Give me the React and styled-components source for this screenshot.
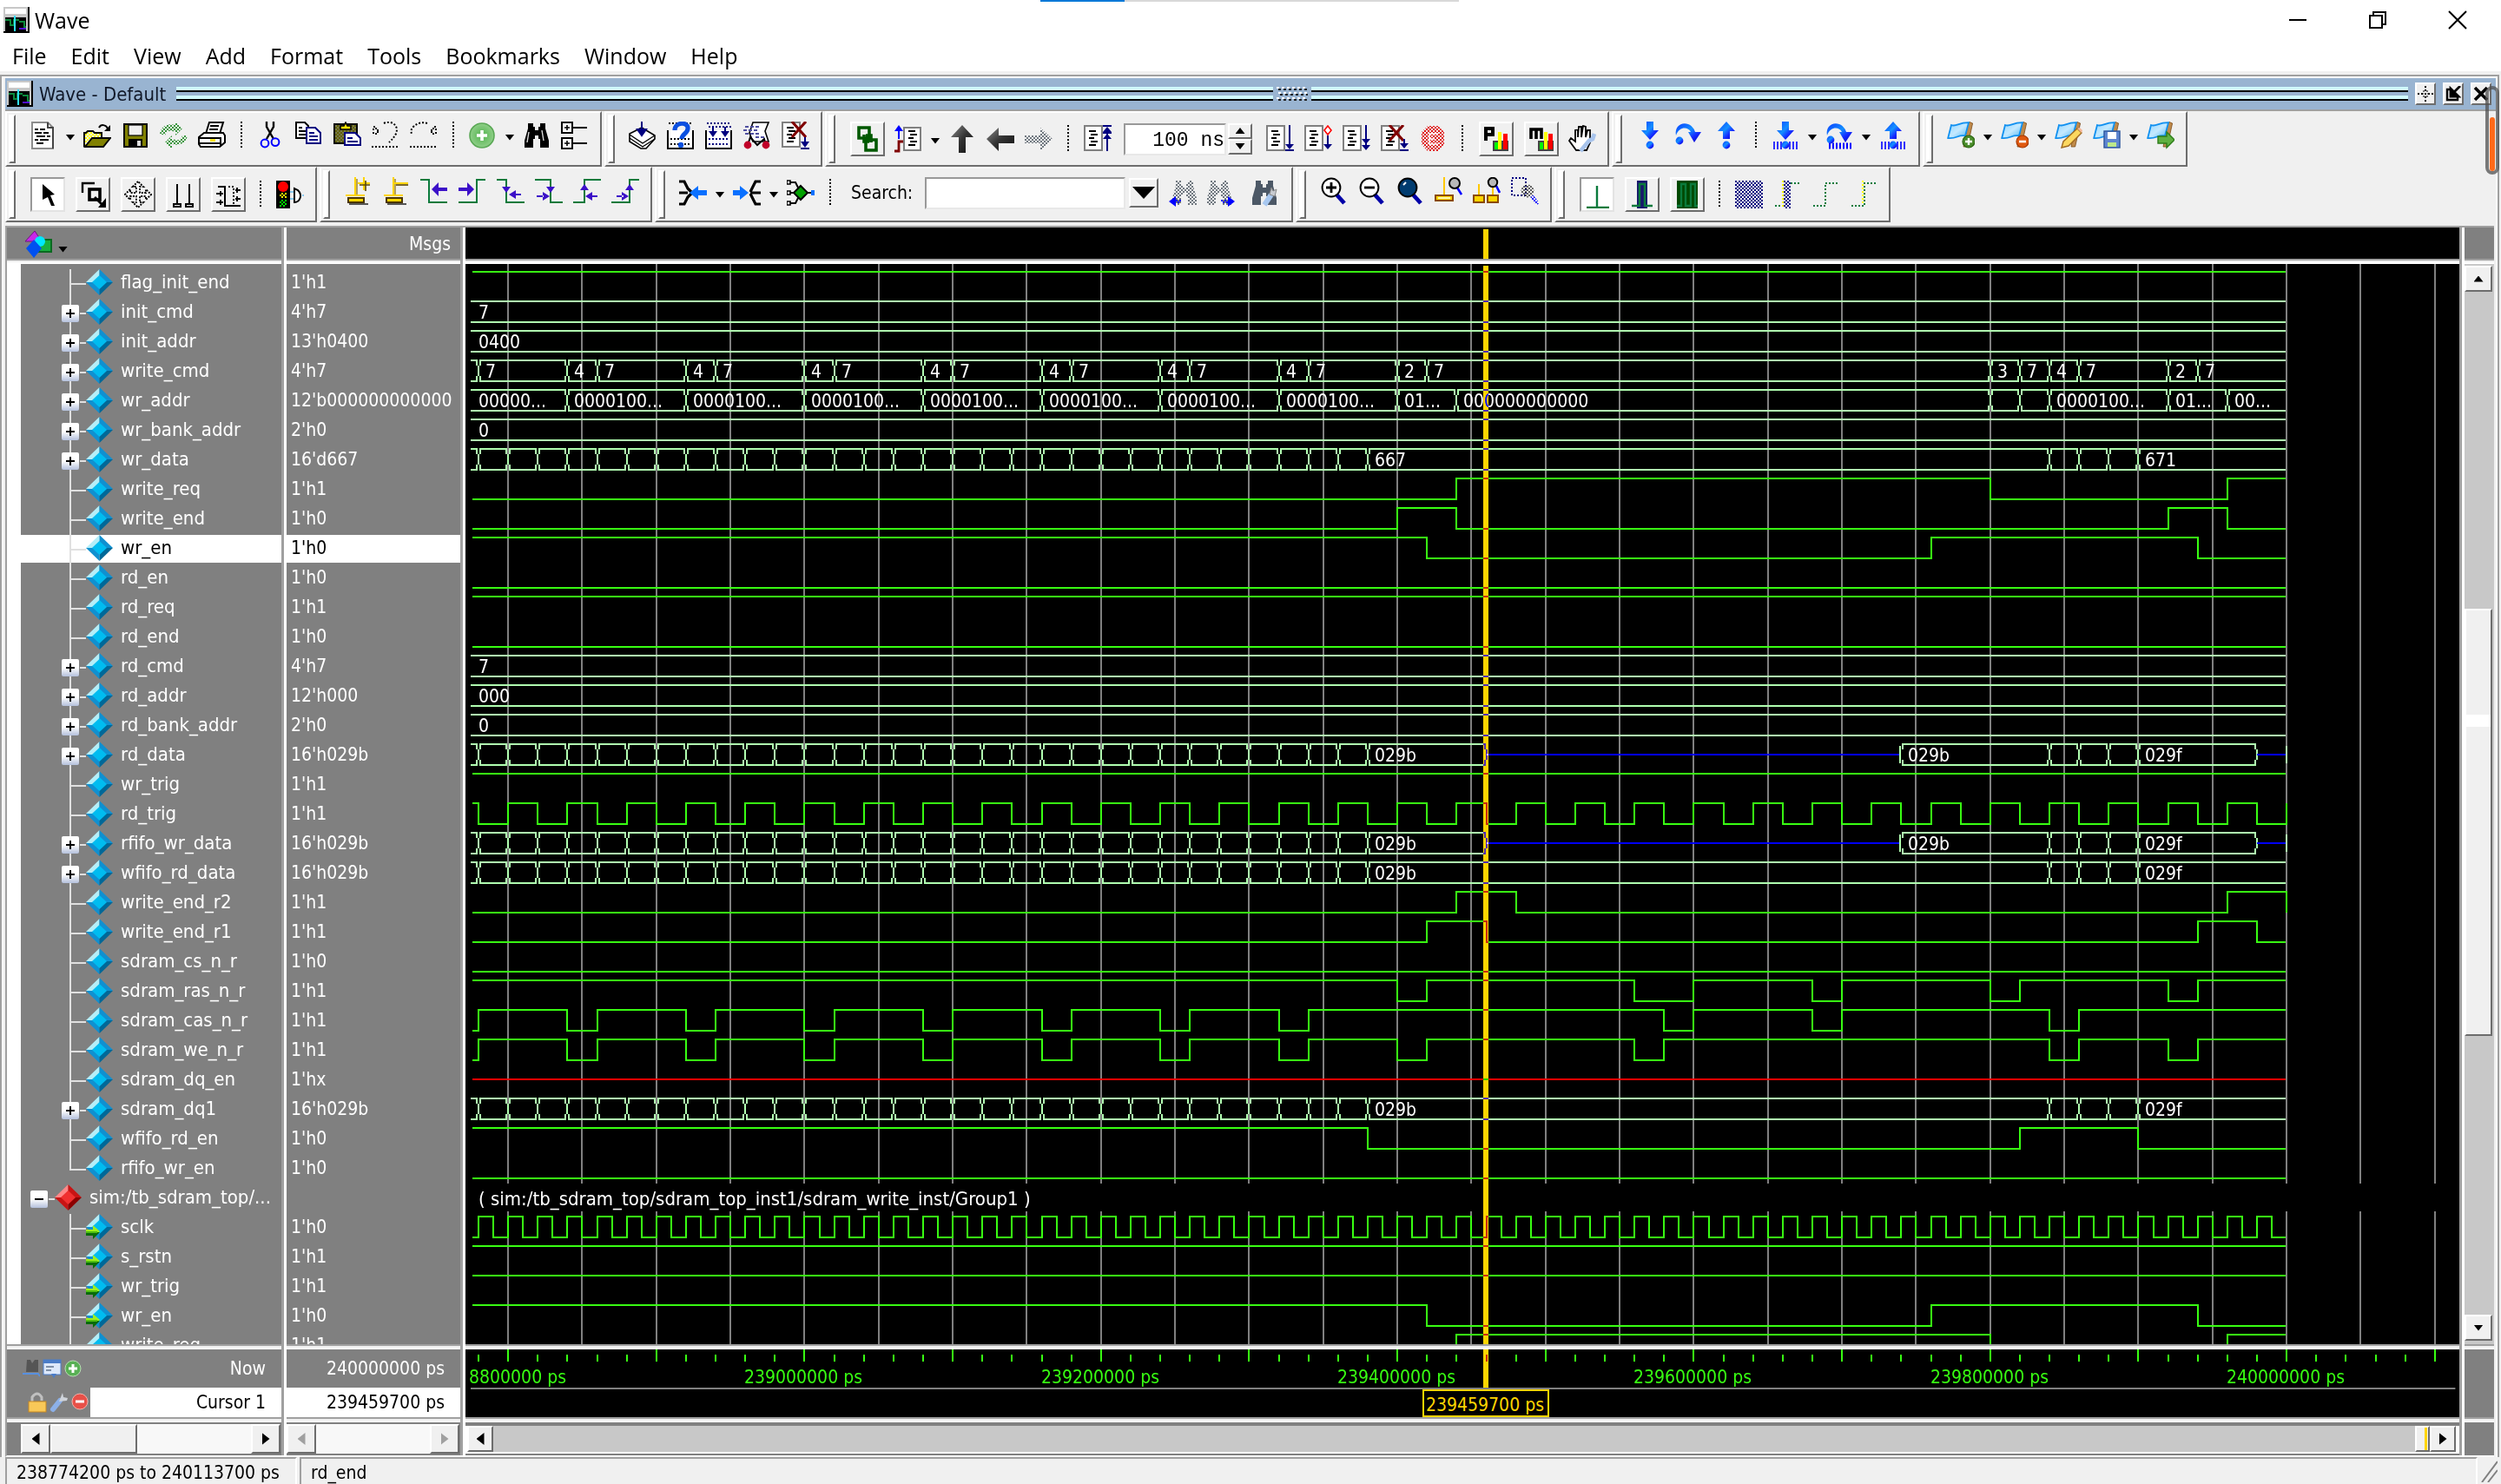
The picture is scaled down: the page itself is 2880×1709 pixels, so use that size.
import React from "react";
import styled, { createGlobalStyle, css } from "styled-components";

const UI = '"DejaVu Sans Condensed", "Noto Sans", sans-serif';
const MENU = '"Open Sans", "Noto Sans", sans-serif';

/* ---------- signal data, times are in 20 ns clock periods ---------- */

const END = 61;
const ticks = (from, to) =>
  Array.from({ length: to - from + 1 }, (_, i) => [from + i, ""]);
const burst = [...ticks(0, 29), [30, "029b"]];
const tail = [...ticks(53, 55), [56, "029f"]];
const bursts = [3, 7, 11, 15, 19, 23, 27];

const high = (...flips) => ({ kind: "bit", level: 1, flips });
const low = (...flips) => ({ kind: "bit", level: 0, flips });
const bus = (...segs) => ({ kind: "bus", segs });

const clock = (step, first) => {
  const out = [];
  for (let t = first; t < END; t += step) out.push(t);
  return out;
};

const signals = [
  { name: "flag_init_end", value: "1'h1", wave: high() },
  { name: "init_cmd", value: "4'h7", wave: bus([null, "7"]) },
  { name: "init_addr", value: "13'h0400", wave: bus([null, "0400"]) },
  {
    name: "write_cmd",
    value: "4'h7",
    wave: bus(
      [null, ""],
      [0, "7"],
      ...bursts.flatMap((t) => [
        [t, "4"],
        [t + 1, "7"],
      ]),
      [31, "2"],
      [32, "7"],
      [51, "3"],
      [52, "7"],
      [53, "4"],
      [54, "7"],
      [57, "2"],
      [58, "7"]
    ),
  },
  {
    name: "wr_addr",
    value: "12'b000000000000",
    wave: bus(
      [null, "00000..."],
      ...bursts.map((t) => [t, "0000100..."]),
      [31, "01..."],
      [33, "000000000000"],
      [51, ""],
      [52, ""],
      [53, "0000100..."],
      [57, "01..."],
      [59, "00..."]
    ),
  },
  { name: "wr_bank_addr", value: "2'h0", wave: bus([null, "0"]) },
  {
    name: "wr_data",
    value: "16'd667",
    wave: bus([null, ""], ...ticks(0, 29), [30, "667"], ...ticks(53, 55), [56, "671"]),
  },
  { name: "write_req", value: "1'h1", wave: low(33, 51, 59) },
  { name: "write_end", value: "1'h0", wave: low(31, 33, 57, 59) },
  { name: "wr_en", value: "1'h0", wave: high(32, 49, 58), selected: true },
  { name: "rd_en", value: "1'h0", wave: low() },
  { name: "rd_req", value: "1'h1", wave: high() },
  { name: "rd_end", value: "1'h0", wave: low() },
  { name: "rd_cmd", value: "4'h7", wave: bus([null, "7"]) },
  { name: "rd_addr", value: "12'h000", wave: bus([null, "000"]) },
  { name: "rd_bank_addr", value: "2'h0", wave: bus([null, "0"]) },
  {
    name: "rd_data",
    value: "16'h029b",
    wave: bus([null, ""], ...burst, [34, "z"], [48, "029b"], ...tail, [60, "z"]),
  },
  { name: "wr_trig", value: "1'h1", wave: high() },
  { name: "rd_trig", value: "1'h1", wave: high(...clock(1, 0), END) },
  {
    name: "rfifo_wr_data",
    value: "16'h029b",
    wave: bus([null, ""], ...burst, [34, "z"], [48, "029b"], ...tail, [60, "z"]),
  },
  { name: "wfifo_rd_data", value: "16'h029b", wave: bus([null, ""], ...burst, ...tail) },
  { name: "write_end_r2", value: "1'h1", wave: low(33, 35, 59, END) },
  { name: "write_end_r1", value: "1'h1", wave: low(32, 34, 58, 60) },
  { name: "sdram_cs_n_r", value: "1'h0", wave: low() },
  { name: "sdram_ras_n_r", value: "1'h1", wave: high(31, 32, 39, 41, 45, 46, 51, 52, 57, 58) },
  {
    name: "sdram_cas_n_r",
    value: "1'h1",
    wave: low(0, ...bursts.flatMap((t) => [t, t + 1]), 40, 41, 45, 46, 53, 54),
  },
  {
    name: "sdram_we_n_r",
    value: "1'h1",
    wave: low(0, ...bursts.flatMap((t) => [t, t + 1]), 31, 32, 39, 40, 53, 54, 57, 58),
  },
  { name: "sdram_dq_en", value: "1'hx", wave: { kind: "unknown" } },
  { name: "sdram_dq1", value: "16'h029b", wave: bus([null, ""], ...burst, ...tail) },
  { name: "wfifo_rd_en", value: "1'h0", wave: high(30, 52, 56) },
  { name: "rfifo_wr_en", value: "1'h0", wave: low(), last: true },
  {
    name: "sim:/tb_sdram_top/...",
    value: "",
    group: true,
    wave: {
      kind: "label",
      text: "( sim:/tb_sdram_top/sdram_top_inst1/sdram_write_inst/Group1 )",
    },
  },
  { name: "sclk", value: "1'h0", port: true, wave: low(...clock(0.5, 0)) },
  { name: "s_rstn", value: "1'h1", port: true, wave: high() },
  { name: "wr_trig", value: "1'h1", port: true, wave: high() },
  { name: "wr_en", value: "1'h0", port: true, wave: high(32, 49, 58) },
  { name: "write_req", value: "1'h1", wave: low(33, 51, 59) },
];

/* ---------- icons, drawn on a 16 unit grid ---------- */

const NAVY = "#000080";
const BLUE = "#0000ff";

const Defs = () => (
  <HiddenSvg aria-hidden="true">
    <defs>
      {[
        ["dotBlack", "#000"],
        ["dotGreen", "#3c9640"],
        ["dotYellow", "#ffff00"],
        ["dotOlive", "#606000"],
        ["dotBlue", BLUE],
        ["dotNavy", NAVY],
        ["dotRed", "#e01818"],
        ["dotLime", "#00e000"],
        ["dotGray", "#707880"],
      ].map(([id, c]) => (
        <pattern key={id} id={id} width="2" height="2" patternUnits="userSpaceOnUse">
          <rect width="1" height="1" fill={c} />
          <rect x="1" y="1" width="1" height="1" fill={c} />
        </pattern>
      ))}
      <linearGradient id="arrowBlue" x1="0" y1="0" x2="1" y2="1">
        <stop offset="0" stopColor="#0a3cff" />
        <stop offset=".45" stopColor="#1490ff" />
        <stop offset=".7" stopColor="#1428ff" />
        <stop offset="1" stopColor="#0000b8" />
      </linearGradient>
      <linearGradient id="arrowDark" x1="0" y1="0" x2="1" y2="1">
        <stop offset="0" stopColor="#8a8a8a" />
        <stop offset=".5" stopColor="#333" />
        <stop offset="1" stopColor="#111" />
      </linearGradient>
      <linearGradient id="flagBlue" x1="0" y1="0" x2="1" y2="1">
        <stop offset="0" stopColor="#8fd4ff" />
        <stop offset=".5" stopColor="#c4e9ff" />
        <stop offset="1" stopColor="#49b4f5" />
      </linearGradient>
      <radialGradient id="plusGreen">
        <stop offset="0" stopColor="#52b24e" />
        <stop offset="1" stopColor="#8fcf88" />
      </radialGradient>
    </defs>
  </HiddenSvg>
);

const MiniDoc = () => (
  <>
    <rect x=".5" y=".5" width="10" height="14" fill="#fff" stroke="#808080" />
    <path d="M3 3.5h4M4 5.5h4M3 7.5h3M4 9.5h4M3 11.5h4" stroke="#000" />
  </>
);
const RedX = ({ x = 0 }) => (
  <path d={`M${5 + x} 0l8 9M${13 + x} 0l-8 9`} stroke="#800000" strokeWidth="1.6" />
);
const Flag = () => (
  <>
    <path d="M13 .3l1.800 .7-3 13.500h-2.300l2.500-13z" fill="#c08a4a" stroke="#7a4a18" strokeWidth=".4" />
    <path
      d="M2.500 2C5.500 3.200 6.500 .5 12.500 .6L10.500 8.200C6 7.500 6 10 .6 9.500z"
      fill="url(#flagBlue)"
      stroke="#1090f0"
      strokeWidth=".9"
    />
  </>
);
const DownArrow = () => <path d="M6 0h4v5h3L8 10.500 3 5h3z" fill="url(#arrowBlue)" />;
const UpArrow = () => <path d="M8 0l5 5.500h-3V10H6V5.500H3z" fill="url(#arrowBlue)" />;
const Hop = () => (
  <path d="M1 8C0 3 4 0 8 1.500c2.500 1 3.500 3 4 4.500h3.500L11.500 12 8 6h1.500C8 3 3 2.500 1 8z" fill="url(#arrowBlue)" />
);
const Bars = () => (
  <path d="M1.500 11.500v4.500M3.500 11.500v4.500M5.500 11.500v4.500M10.500 11.500v4.500M12.500 11.500v4.500M14.500 11.500v4.500" stroke={BLUE} strokeWidth=".8" />
);
const Ball = ({ x = 8, y = 13.5 }) => <circle cx={x} cy={y} r="2.200" fill="url(#arrowBlue)" />;
const Lens = ({ children, fill = "#fff" }) => (
  <>
    <path d="M9.500 10l4.500 5" stroke="#0000a8" strokeWidth="2.400" />
    <circle cx="6.500" cy="6" r="5.200" fill={fill} stroke="#000" strokeWidth="1" />
    {children}
  </>
);
const SmallCursor = ({ x = 0 }) => (
  <>
    <path d={`M${5.5 + x} 0v10`} stroke="#ffc800" strokeWidth="1" />
    <rect x={0.5 + x} y="10.500" width="10" height="3" fill="#ffd500" stroke="#8a4a00" />
    <path d={`M${2 + x} 12h7`} stroke="#fff4b0" />
  </>
);
const AddCursor = ({ minus }) => (
  <>
    <path d="M3 15.500h11" stroke="#555" />
    <path d="M6.500 0v11M1 10.500h11" stroke="#ffd500" />
    <path d="M7.500 1v9" stroke="#8a6a00" strokeWidth=".6" />
    <rect x="2.500" y="12" width="9" height="2.500" fill="#ffd500" stroke="#4a3500" />
    <path d={minus ? "M7 3.500h8" : "M8 3.500h7M11.500 0v7.500"} stroke="#ffd500" />
    <path d={minus ? "M8 4.500h7" : "M9 4.500h6M12.500 2v6"} stroke="#5a4600" strokeWidth=".8" />
  </>
);
const EDGE = "#0a7a3c";
const PURPLE = "#3c10c8";
const arrowHead = {
  left: "M0 0l4-4v3h5v2H4v3z",
  right: "M9 0L5-4v3H0v2h5v3z",
};
const Binoculars = ({ fill = "#000" }) => (
  <path
    d="M3 1h3v2h1v2h2V3h1V1h3v3l2 7v4h-5v-5H9V8H7v2H6v5H1v-4l2-7z"
    fill={fill}
  />
);

const glyphs = {
  new: (
    <>
      <path d="M1.500 .5h9l3 3v12h-12z" fill="#fff" stroke="#8c8c8c" />
      <path d="M13.500 3v12.500M10.500 .5v3h3" stroke="#444" fill="none" />
      <path d="M3 4.500h2m1 0h3M3 6.500h4m1 0h3M4 8.500h5m1 0h2M3 10.500h2m1 0h5M4 12.500h4" stroke="#000" />
    </>
  ),
  open: (
    <>
      <path d="M.5 14.500V6.500h1l1-1h3l1 1h4v3" fill="url(#dotYellow)" stroke="#000" />
      <path d="M1 14.500L5 9.500h10.500l-4 5z" fill="#808000" stroke="#000" />
      <path d="M9 3.500c1-2 4-2 5 .5" stroke="#000" fill="none" />
      <path d="M15.500 2v3.500H12z" />
    </>
  ),
  save: (
    <>
      <rect x="1.500" y="1.500" width="13" height="13" fill="#808000" stroke="#000" />
      <rect x="4" y="2" width="8" height="6" fill="#f0f0f0" stroke="#000" strokeWidth=".6" />
      <rect x="4" y="10" width="8" height="5" />
      <rect x="9" y="11" width="2" height="3" fill="#ddd" />
    </>
  ),
  reload: (
    <path
      d="M0 7c1-5 5-6 9-5V0l4 4-4 4V6C6 5 4 5 3 8zM16 8c-1 5-5 6-9 5v3l-4-4 4-4v2c3 1 5 1 6-2z"
      fill="url(#dotGreen)"
    />
  ),
  print: (
    <>
      <path d="M4.500 7L6.500 .5h8l-2 6.500" fill="#fff" stroke="#000" />
      <path d="M.5 9l3-2.500h11l1 1.500v4l-3 2.500H1.500L.5 13z" fill="#fff" stroke="#000" />
      <path d="M7 2.500h5M6.500 4.500h5M1 9.500h12v5M1 12.500h12" stroke="#000" fill="none" />
      <path d="M7 10.800h3" stroke="#ffe600" strokeWidth="1.400" />
    </>
  ),
  cut: (
    <>
      <path d="M5.500 0v3l4 7M9.500 0v3l-4 7" stroke="#000" fill="none" strokeWidth="1.200" />
      <circle cx="4.500" cy="12.500" r="2.200" fill="none" stroke={BLUE} />
      <circle cx="10.500" cy="11.800" r="2.200" fill="none" stroke={BLUE} />
    </>
  ),
  copy: (
    <>
      <path d="M.5 .5h5l2 2v7h-7z" fill="#fff" stroke="#000" />
      <path d="M2 3.500h2M2 5.500h4M2 7.500h4" stroke="#000" />
      <path d="M6.500 3.500h5l3 3v6h-8z" fill="#fff" stroke={NAVY} />
      <path d="M8 6.500h3M8 8.500h5M8 10.500h5" stroke={NAVY} />
    </>
  ),
  paste: (
    <>
      <rect x=".5" y="1.500" width="13" height="11" fill="#77774c" stroke="#000" />
      <rect x="1" y="2" width="12" height="10" fill="url(#dotOlive)" />
      <path d="M4 4.500V2.500h2L7 .5l1 2h2v2z" fill="#ffe600" stroke="#000" strokeWidth=".8" />
      <path d="M6.500 6.500h6l3 3v4h-9z" fill="#fff" stroke={NAVY} />
      <path d="M8 9.500h3M8 11.500h6" stroke={NAVY} />
    </>
  ),
  undo: (
    <>
      <path d="M1 3h1v1h1v1h1v1H3v1H1zM7 1c4-2 9 1 7 6-1 2-2 3-4 5" fill="none" stroke="#000" strokeDasharray="1 1" />
      <path d="M0 14.500h16" stroke="#000" strokeDasharray="1 1" />
    </>
  ),
  redo: (
    <>
      <path d="M15 3h-1v1h-1v1h-1v1h1v1h2zM10 1C7 0 4 1 2 3S1 6 1 8" fill="none" stroke="#000" strokeDasharray="1 1" />
      <path d="M0 14.500h16" stroke="#000" strokeDasharray="1 1" />
    </>
  ),
  add: (
    <>
      <circle cx="7.500" cy="8" r="7" fill="url(#plusGreen)" stroke="#5aa855" strokeWidth=".8" />
      <path d="M7.500 5v6M4.500 8h6" stroke="#fff" strokeWidth="1.800" />
    </>
  ),
  find: (
    <>
      <Binoculars />
      <path d="M3.500 6l-1 6M11 5l1 6" stroke="#ddd" strokeWidth=".7" />
    </>
  ),
  tree: (
    <>
      <path d="M6 3.500h9M6 12.500h9" stroke="#000" />
      <rect x=".5" y=".5" width="6" height="6" fill="#fff" stroke="#000" />
      <rect x=".5" y="9.500" width="6" height="6" fill="#fff" stroke="#000" />
      <path d="M2 3.500h3M3.500 2v3M2 12.500h3M3.500 11v3" stroke="#000" strokeWidth=".8" />
    </>
  ),
  compile: (
    <>
      <path d="M.5 11.500V7l7-3.500 7.500 4.500v2l-5 5.500H7z" fill="#fff" stroke="#000" strokeWidth=".8" />
      <path d="M.5 7.500l7.500 5 7-4.500M.5 9.500l7.500 5 7-4.500" stroke="#000" strokeWidth=".7" fill="none" />
      <path d="M7.500 0v5M5 4.500h5L7.500 8z" fill={NAVY} stroke={NAVY} />
    </>
  ),
  compileOut: (
    <>
      <path d="M.5 5v10.500h14.500V5" fill="#fff" stroke="#000" />
      <path d="M2 10h12M2 13h12M1 1h14" stroke="#000" strokeDasharray="1 1" />
      <path d="M4.500 5c0-5 8-5 7.500-1C12 7 8.500 7 8.500 10" fill="none" stroke="#0a50e0" strokeWidth="2.600" />
      <circle cx="8" cy="13.500" r="1.600" fill="#0a50e0" />
    </>
  ),
  compileAll: (
    <>
      <path d="M.5 5v10.500h14.500V5" fill="#fff" stroke="#000" />
      <path d="M2 10h12M2 13h12M1 1h14M2 3h13" stroke={NAVY} strokeDasharray="1 1" />
      <path d="M4.500 3v4M11.500 3v4" stroke={NAVY} />
      <path d="M2 5.500h5L4.500 9zM9 5.500h5L11.500 9z" fill={NAVY} />
    </>
  ),
  simulate: (
    <>
      <path d="M5.500 .5h9l-2 5 2 6h-9l-2-5z" fill="#fff" stroke="#000" strokeWidth=".8" />
      <path d="M1 3h9M0 5h9M1 7h9M7 9h5" stroke="#5050a0" strokeDasharray="2 1" />
      <path d="M2.500 13.500L4 9l4 4.500L12 10l1 3.500" stroke="#000" fill="none" />
      <circle cx="2.500" cy="13.500" r="2.200" fill="#c00028" />
      <circle cx="13" cy="13.500" r="2.200" fill="#c00028" />
    </>
  ),
  endSim: (
    <>
      <MiniDoc />
      <RedX x={1} />
      <path d="M13.500 9v5M11 15.500h5" stroke={NAVY} />
      <path d="M11 11.500h5L13.500 15z" fill={NAVY} />
    </>
  ),
  link: (
    <path
      d="M3 1.500h6v6H3zM7 8.500h6v6H7zM6 5.500v4h3M10 10V6H7"
      fill="none"
      stroke="#005800"
      strokeWidth="1.800"
    />
  ),
  restart: (
    <>
      <path d="M5.500 1.500h9.500v13H5.500z" fill="#fff" stroke="#808080" />
      <path d="M8 3.500h4M9 5.500h4M8 7.500h3M9 9.500h4M8 11.500h4" stroke="#000" />
      <path d="M2.500 8V2" stroke={BLUE} />
      <path d="M0 3.500h5L2.500 0z" fill={BLUE} />
      <path d="M0 15h2.500V9.500H5" stroke="#800000" fill="none" strokeWidth="1.400" />
    </>
  ),
  up: <path d="M8 0l6.500 7H10v9H6V7H1.500z" fill="url(#arrowDark)" />,
  back: <path d="M0 8l7-6.500V6h9v4.500H7V15z" fill="url(#arrowDark)" />,
  forward: <path d="M16 8L9 1.500V6H0v4.500h9V15z" fill="url(#dotGray)" />,
  runUp: (
    <>
      <MiniDoc />
      <path d="M13.500 5v10M11 .5h5M11 4.500h5" stroke={NAVY} />
      <path d="M11 4h5L13.500 1zM11 8h5l-2.500-3z" fill={NAVY} />
    </>
  ),
  run: (
    <>
      <MiniDoc />
      <path d="M13.500 0v13M11 14.500h5" stroke={NAVY} />
      <path d="M11 11h5l-2.500 3z" fill={NAVY} />
    </>
  ),
  runContinue: (
    <>
      <MiniDoc />
      <path d="M13.500 6v7" stroke={NAVY} />
      <path d="M13.500 .5L15.500 3l-2 2.500-2-2.500z" fill="#fff" stroke="#f00" strokeWidth=".8" />
      <path d="M11 11h5l-2.500 3z" fill={NAVY} />
    </>
  ),
  runAll: (
    <>
      <MiniDoc />
      <path d="M13.500 0v13" stroke={NAVY} />
      <path d="M11 8h5l-2.500 3zM11 11.500h5l-2.500 3z" fill={NAVY} />
    </>
  ),
  breakRun: (
    <>
      <MiniDoc />
      <RedX x={0} />
      <path d="M13.500 8v5M11 14.500h5" stroke={NAVY} />
      <path d="M11 10.500h5l-2.500 3z" fill={NAVY} />
    </>
  ),
  stop: (
    <>
      <path d="M5 .5h6L14.500 4v7L11 15H5L1.500 11V4z" fill="url(#dotRed)" />
      <path d="M11 5H6v6h5M6 8h3" stroke="#fff" fill="none" strokeWidth=".7" />
    </>
  ),
  profile: (
    <>
      <path d="M2 9V2h4v3.500H2" stroke="#000" strokeWidth="2" fill="none" />
      <path d="M6 9h9v6H6z" fill="#444" />
      <path d="M7 10h2v4H7z" fill="#0f0" />
      <path d="M9 4h2v10H9z" fill="#ff0" />
      <path d="M12 5h2.500v9H12z" fill="#f00" />
    </>
  ),
  memory: (
    <>
      <path d="M2 8V2.500h6V8M5 2v6" stroke="#000" strokeWidth="1.800" fill="none" />
      <path d="M6 9h9v6H6z" fill="#444" />
      <path d="M7 10h2v4H7z" fill="#0f0" />
      <path d="M9.500 4h2v10h-2z" fill="#ff0" />
      <path d="M12 5h2.500v9H12z" fill="#f00" />
    </>
  ),
  hand: (
    <>
      <path
        d="M4.500 14.500L.5 9l1-1.500L4 9.500V3l1.500-.5V7l.5-6h1.500v6L8.500 .5 10 1v6l1-4h1.500v7l-2 4.500z"
        fill="#fff"
        stroke="#000"
        strokeWidth=".9"
      />
      <path d="M7 15l5-6 2-1 1-3" stroke="#a8c4ec" strokeWidth="2.400" fill="none" />
    </>
  ),
  stepInto: (
    <>
      <DownArrow />
      <Ball />
    </>
  ),
  stepOver: (
    <>
      <Hop />
      <Ball x={3} y={11} />
    </>
  ),
  stepOut: (
    <>
      <UpArrow />
      <Ball />
    </>
  ),
  stepIntoHere: (
    <>
      <DownArrow />
      <Bars />
      <Ball />
    </>
  ),
  stepOverHere: (
    <>
      <Hop />
      <path d="M2 14h14" stroke={BLUE} strokeWidth="3.500" strokeDasharray="1 1" />
      <Ball x={3} y={10.5} />
    </>
  ),
  stepOutHere: (
    <>
      <UpArrow />
      <Bars />
      <Ball />
    </>
  ),
  flagAdd: (
    <>
      <Flag />
      <circle cx="12.500" cy="11.500" r="3.500" fill="#4a8c2a" stroke="#2a6410" strokeWidth=".6" />
      <path d="M12.500 9.500v4M10.500 11.500h4" stroke="#fff" strokeWidth="1.200" />
    </>
  ),
  flagRemove: (
    <>
      <Flag />
      <circle cx="12.500" cy="11.500" r="3.500" fill="#e05a10" stroke="#a83800" strokeWidth=".6" />
      <path d="M10.500 11.500h4" stroke="#fff" strokeWidth="1.300" />
    </>
  ),
  flagEdit: (
    <>
      <Flag />
      <path d="M4 15l1-3.500L13 4l2.500 2.500L8 14z" fill="#fcd860" stroke="#a06a20" strokeWidth=".7" />
      <path d="M13 4l2.500 2.500 .5-1.500-1.500-1.500z" fill="#f4b89a" />
    </>
  ),
  flagSave: (
    <>
      <Flag />
      <rect x="6.500" y="5.500" width="9" height="9.500" fill="#5f86d0" stroke="#2c549c" strokeWidth=".7" />
      <path d="M8.500 6h5v4h-5z" fill="#fff" />
      <path d="M8.500 12h5v2.500h-5z" fill="#bde88a" />
    </>
  ),
  flagGo: (
    <>
      <Flag />
      <path d="M6.500 8.500h5V6l4.500 4.500-4.500 4.500v-2.500h-5z" fill="#5fb040" stroke="#2c7c18" strokeWidth=".7" />
    </>
  ),
  select: <path d="M5 2l7 6-2.500.5L12 14.500h-2L8 9.500 5 11z" />,
  zoomMode: (
    <>
      <path d="M2 7V1.500h7" fill="none" stroke="#000" strokeWidth="1.200" />
      <rect x="6" y="5" width="6" height="6" fill="none" stroke="#000" strokeWidth="1.800" />
      <path d="M11 15.500h4.500V10z" />
      <path d="M9 9.500l5 5" stroke="#000" strokeWidth="1.400" />
    </>
  ),
  pan: (
    <path
      d="M8 .5L5 3.500h2V7H3.500V5l-3 3 3 3V9H7v3.500H5l3 3 3-3H9V9h3.500v2l3-3-3-3v2H9V3.500h2z"
      fill="#fff"
      stroke="#000"
      strokeDasharray="1 .7"
    />
  ),
  twoCursors: (
    <path d="M4.500 2v11M11.500 2v11M2.500 13.500h4v1.500h-4zM9.500 13.500h4v1.500h-4z" fill="none" stroke="#000" />
  ),
  edit: (
    <>
      <path d="M2 3.500h4v11h9" fill="none" stroke="#000" />
      <path d="M8 3.500h3v11" fill="none" stroke="#000" strokeDasharray="1 1" />
      <path d="M1 7.500h4M3.500 6v3M1 12.500h4M3.500 11v3M15 5.500h-3M13 4v3M15 10.500h-3M13 9v3" stroke="#000" strokeWidth=".9" />
    </>
  ),
  traffic: (
    <>
      <rect width="8" height="16" />
      <circle cx="4" cy="3.500" r="3" fill="#f00" />
      <path d="M2 7h4v3H2z" fill="url(#dotYellow)" />
      <path d="M2 11h4v4H2z" fill="url(#dotLime)" />
      <path d="M10.500 4.500v8c3 0 5-4 2-7z" fill="#fff" stroke="#000" />
      <path d="M8 6.500h2M8 10.500h2M15 8.500h1" stroke="#88c8f0" />
    </>
  ),
  cursorAdd: <AddCursor />,
  cursorRemove: <AddCursor minus />,
  prevEdge: (
    <>
      <path d="M0 1.500h5v13h10.500" stroke={EDGE} fill="none" />
      <path d={arrowHead.left} transform="translate(6.500 7)" fill={PURPLE} />
    </>
  ),
  nextEdge: (
    <>
      <path d="M0 14.500h10.500v-13h5" stroke={EDGE} fill="none" />
      <path d={arrowHead.right} transform="translate(0 7)" fill={PURPLE} />
    </>
  ),
  prevFall: (
    <>
      <path d="M0 1.500h5.500v13H16" stroke={EDGE} fill="none" />
      <path d="M3 5.500h5L5.500 9zM7 10l4-2.500v5zM10 9.500h4v1h-4z" fill={PURPLE} />
    </>
  ),
  nextFall: (
    <>
      <path d="M0 1.500h9v13h7" stroke={EDGE} fill="none" />
      <path d="M6.500 5.500h5L9 9zM8.500 11l-4-2.500v5zM1 10.500h4v1H1z" fill={PURPLE} />
    </>
  ),
  prevRise: (
    <>
      <path d="M0 14.500h6.500v-13H16" stroke={EDGE} fill="none" />
      <path d="M4 7.500h5L6.500 4zM7 11l4-2.500v5zM10 10.500h4v1h-4z" fill={PURPLE} />
    </>
  ),
  nextRise: (
    <>
      <path d="M0 14.500h10.500v-13H16" stroke={EDGE} fill="none" />
      <path d="M8 7.500h5L10.500 4zM10 11L6 8.500v5zM3 10.500h4v1H3z" fill={PURPLE} />
    </>
  ),
  driver: (
    <>
      <path d="M0 1.500h3l2 4 2 2M0 14.500h3l2-4 2-2M0 8h5" fill="none" stroke="#000" strokeWidth="1.600" />
      <path d="M6 8l5-4v2.500h5v3h-5V12z" fill="#0a70ff" />
    </>
  ),
  reader: (
    <>
      <path d="M16 1.500h-3l-2 4-1 2M16 14.500h-3l-2-4-1-2M16 8h-6" fill="none" stroke="#000" strokeWidth="1.600" />
      <path d="M9 8L4 4v2.500H0v3h4V12z" fill="#0a70ff" />
    </>
  ),
  fan: (
    <>
      <path d="M2 2h3l2 4h2M2 8h12M2 14h3l2-4h2" fill="none" stroke="#000" />
      <path d="M8 4l4 4-4 4-4-4z" fill="#00a000" stroke="#000" />
      <path d="M0 1h2v2H0zM0 7h2v2H0zM0 13h2v2H0z" fill="#fff" stroke="#000" strokeWidth=".8" />
      <rect x="14" y="6.500" width="2" height="3" fill="#0a70ff" />
    </>
  ),
  findPrev: (
    <>
      <g transform="translate(1 0)">
        <Binoculars fill="url(#dotGray)" />
      </g>
      <path d="M0 13l4-3v6z" fill={BLUE} />
      <path d="M4 13h3" stroke="url(#dotBlue)" strokeWidth="2" />
    </>
  ),
  findNext: (
    <>
      <g transform="translate(-1 0)">
        <Binoculars fill="url(#dotGray)" />
      </g>
      <path d="M16 13l-4-3v6z" fill={BLUE} />
      <path d="M8 13h4" stroke="url(#dotBlue)" strokeWidth="2" />
    </>
  ),
  findOptions: (
    <>
      <g transform="translate(-1 0)">
        <Binoculars fill="#4c5866" />
      </g>
      <path d="M7 15l4-6" stroke="#a8c8f0" strokeWidth="3" />
      <path d="M10 9l1-4 1 2 2-1-1 4z" fill="#c8ccd2" stroke="#888" strokeWidth=".5" />
    </>
  ),
  zoomIn: (
    <Lens>
      <path d="M6.500 3v6M3.500 6h6" stroke="#000" strokeWidth="1.400" />
    </Lens>
  ),
  zoomOut: (
    <Lens>
      <path d="M3.500 6h6" stroke="#000" strokeWidth="1.400" />
    </Lens>
  ),
  zoomFull: (
    <Lens fill="#003c70">
      <path d="M4 4.500l1.500-1.500" stroke="#fff" />
    </Lens>
  ),
  zoomCursor: (
    <>
      <SmallCursor />
      <path d="M13 6l2.500 4" stroke={BLUE} strokeWidth="1.300" />
      <circle cx="11.500" cy="3.500" r="3" fill="#b8b8b8" stroke="#000" />
    </>
  ),
  zoomRange: (
    <>
      <path d="M3.500 4v6M11.500 4v6" stroke="#ffc800" />
      <rect x=".5" y="10.500" width="6" height="4" fill="#ffd500" stroke="#8a4a00" />
      <rect x="8.500" y="10.500" width="6" height="4" fill="#ffd500" stroke="#8a4a00" />
      <path d="M13.500 5l2 4" stroke={BLUE} strokeWidth="1.300" />
      <circle cx="11.500" cy="3" r="2.600" fill="#b8b8b8" stroke="#000" />
    </>
  ),
  zoomArea: (
    <>
      <path d="M.5 .5h8v10h-8z" fill="none" stroke={NAVY} strokeDasharray="1 1" />
      <path d="M12 11l3.500 4.500" stroke="url(#dotBlue)" strokeWidth="2" />
      <circle cx="9.500" cy="8" r="3.800" fill="url(#dotBlack)" opacity=".6" />
    </>
  ),
  lineWave: <path d="M8 3v12M2 15.500h13" stroke={EDGE} strokeWidth="1.200" />,
  navyWave: (
    <>
      <rect x="5" width="6" height="16" fill="#18186c" />
      <path d="M2 14.500h4.500V2h3v12.500H14" stroke={EDGE} fill="none" strokeWidth="1.200" />
    </>
  ),
  greenWave: (
    <>
      <rect x="2" width="12" height="16" fill="#004800" />
      <path d="M2 14.500h2.500V2h2.500v12.500h3V2h2.500v12.500H14" stroke={EDGE} fill="none" strokeWidth="1.200" />
    </>
  ),
  hatch: <path d="M0 0h16v16H0z" fill="url(#dotNavy)" />,
  hatchEdge: (
    <>
      <path d="M6 0h4v16H6z" fill="url(#dotNavy)" />
      <path d="M5.500 0v16" stroke="#ff0" strokeDasharray="1 1" />
      <path d="M1 14.500h4M10 1.500h5" stroke={EDGE} strokeDasharray="1 1" />
    </>
  ),
  dotEdge: <path d="M1 14.500h7v-13h7" stroke={EDGE} fill="none" strokeDasharray="1 1" />,
  dotEdgeYellow: (
    <>
      <path d="M7.500 0v15" stroke="#ff0" strokeDasharray="1 1" />
      <path d="M1 14.500h7.500v-13h6.500" stroke={EDGE} fill="none" strokeDasharray="1 1" />
    </>
  ),
};

const Glyph = ({ name, size = 32 }) => (
  <svg width={size} height={size} viewBox="0 0 16 16" aria-hidden="true" fill="#000">
    {glyphs[name]}
  </svg>
);

const WaveLogo = () => (
  <svg width="30" height="30" viewBox="0 0 15 15" aria-hidden="true">
    <rect width="15" height="15" fill="#000" />
    <rect width="14" height="14" fill="#c8c8c8" />
    <rect x="1" y="1" width="12" height="3" fill="#fff" />
    <rect x="1" y="6" width="12" height="8" fill="#000" />
    <path d="M1 7.500h3v3h2v-3h3M9 8.500h3v3h1" stroke="#0a8a3c" fill="none" />
    <path d="M6.500 5v9" stroke="#30e0ff" />
    <path d="M9 12.500h4" stroke="#5010d0" />
  </svg>
);

const Diamond = ({ port, red }) => {
  const c = red
    ? ["#f88", "#f03030", "#c81414", "#8c0000"]
    : ["#b4eef8", "#00bcf0", "#1090d0", "#006898"];
  return (
    <svg width="31" height="30" viewBox="0 0 31 30" aria-hidden="true">
      <path d="M15.500 0L0 15h15.500z" fill={c[0]} />
      <path d="M15.500 0L31 15H15.500z" fill={c[2]} />
      <path d="M15.500 30L0 15h15.500z" fill={c[2]} />
      <path d="M15.500 30L31 15H15.500z" fill={c[3]} />
      <path d="M15.500 7L24 15l-8.500 8L7 15z" fill={c[1]} />
      {port && (
        <>
          <path d="M0 18h8v-5l8 7-8 8v-4H0z" fill="#9cf020" />
          <path d="M0 21h16l-8 8v-4H0z" fill="#0a6a0a" />
          <path d="M0 20h13v2H0z" fill="#50c010" />
        </>
      )}
    </svg>
  );
};

/* ---------- toolbar contents ---------- */

const icon = (name, label) => ({ name, label });
const framed = (name, label, pressed) => ({ name, label, frame: true, pressed });
const CARET = { caret: true };
const BAR = { bar: true };
const GAP = { gap: true };

const topBars = [
  [
    icon("new", "New"), CARET, icon("open", "Open"), icon("save", "Save"),
    icon("reload", "Reload"), icon("print", "Print"), BAR, icon("cut", "Cut"),
    icon("copy", "Copy"), icon("paste", "Paste"), icon("undo", "Undo"),
    icon("redo", "Redo"), BAR, icon("add", "Add Selected to Window"), CARET,
    icon("find", "Find"), icon("tree", "Collapse All"),
  ],
  [
    icon("compile", "Compile"), icon("compileOut", "Compile Out-of-Date"),
    icon("compileAll", "Compile All"), icon("simulate", "Simulate"),
    icon("endSim", "End Simulation"),
  ],
  [
    framed("link", "Environment"), icon("restart", "Environment Back"), CARET,
    icon("up", "Up"), icon("back", "Back"), icon("forward", "Forward"), BAR,
    icon("runUp", "Restart"), { runLength: true }, icon("run", "Run"),
    icon("runContinue", "Continue Run"), icon("runAll", "Run All"),
    icon("breakRun", "Break"), icon("stop", "Stop"), BAR,
    framed("profile", "Performance Profiling"), framed("memory", "Memory Profiling"),
    icon("hand", "Edit Breakpoints"),
  ],
  [
    icon("stepInto", "Step Into"), icon("stepOver", "Step Over"),
    icon("stepOut", "Step Out"), BAR, icon("stepIntoHere", "Step Into Current"), CARET,
    icon("stepOverHere", "Step Over Current"), CARET, icon("stepOutHere", "Step Out Current"),
  ],
  [
    icon("flagAdd", "Add Bookmark"), CARET, icon("flagRemove", "Delete Bookmark"), CARET,
    icon("flagEdit", "Manage Bookmarks"), icon("flagSave", "Save Bookmarks"), CARET,
    icon("flagGo", "Jump to Bookmark"),
  ],
];

const lowerBars = [
  [
    framed("select", "Select Mode", true), framed("zoomMode", "Zoom Mode"),
    framed("pan", "Pan Mode"), framed("twoCursors", "Two Cursor Mode"),
    framed("edit", "Edit Mode"), BAR, icon("traffic", "Stop Drawing"),
  ],
  [
    icon("cursorAdd", "Insert Cursor"), icon("cursorRemove", "Delete Cursor"),
    icon("prevEdge", "Find Previous Transition"), icon("nextEdge", "Find Next Transition"),
    icon("prevFall", "Find Previous Falling Edge"), icon("nextFall", "Find Next Falling Edge"),
    icon("prevRise", "Find Previous Rising Edge"), icon("nextRise", "Find Next Rising Edge"),
  ],
  [
    icon("driver", "Show Drivers"), CARET, icon("reader", "Show Readers"), CARET,
    icon("fan", "Show Cone"), BAR, { search: true }, icon("findPrev", "Search Reverse"),
    icon("findNext", "Search Forward"), GAP, icon("findOptions", "Search Options"),
  ],
  [
    icon("zoomIn", "Zoom In"), icon("zoomOut", "Zoom Out"), icon("zoomFull", "Zoom Full"),
    icon("zoomCursor", "Zoom In on Cursor"), icon("zoomRange", "Zoom Between Cursors"),
    icon("zoomArea", "Zoom Other Window"),
  ],
  [
    framed("lineWave", "Show Line", true), framed("navyWave", "Show Filled"),
    framed("greenWave", "Show Solid"), BAR, icon("hatch", "Expanded Time Off"),
    icon("hatchEdge", "Expanded Time Deltas"), icon("dotEdge", "Expanded Time Events"),
    icon("dotEdgeYellow", "Expand All Time"),
  ],
];

const Tool = ({ item }) => {
  if (item.bar) return <Bar />;
  if (item.gap) return <Gap />;
  if (item.caret)
    return (
      <CaretButton aria-label="More">
        <Triangle />
      </CaretButton>
    );
  if (item.runLength)
    return (
      <RunLength>
        <TimeInput defaultValue="100 ns" aria-label="Run length" />
        <Spinner>
          <SpinButton aria-label="Increase">
            <Triangle $up />
          </SpinButton>
          <SpinButton aria-label="Decrease">
            <Triangle />
          </SpinButton>
        </Spinner>
      </RunLength>
    );
  if (item.search)
    return (
      <SearchBox>
        <label htmlFor="wave-search">Search:</label>
        <SearchInput id="wave-search" />
        <ComboButton aria-label="Search history">
          <Triangle $big />
        </ComboButton>
      </SearchBox>
    );
  if (item.frame)
    return (
      <FrameSlot>
        <FrameButton $pressed={item.pressed} aria-label={item.label}>
          <Glyph name={item.name} />
        </FrameButton>
      </FrameSlot>
    );
  return (
    <IconButton aria-label={item.label}>
      <Glyph name={item.name} />
    </IconButton>
  );
};

const ToolbarRow = ({ groups }) => (
  <BarRow>
    {groups.map((items, i) => (
      <Group key={i} role="toolbar">
        <Grip />
        <Tools>
          {items.map((item, j) => (
            <Tool key={j} item={item} />
          ))}
        </Tools>
      </Group>
    ))}
  </BarRow>
);

/* ---------- wave drawing ---------- */

const PERIOD = 1024 / 30;
const at = (t) => Math.round(15 + t * PERIOD);
const ROW = 34;
const TOP = 9;
const SWING = 24;
const RIGHT = at(END) - 1;
const CURSOR = 1172;
const GREEN = "#38ff12";
const PALE = "#b0ffb0";

const bitPath = ({ level, flips }, y) => {
  const level2y = (l) => (l ? y : y + SWING);
  let l = level;
  let d = `M8 ${level2y(l)}`;
  flips.forEach((t) => {
    l = 1 - l;
    d += `H${at(t)}V${level2y(l)}`;
  });
  return flips[flips.length - 1] === END ? d : `${d}H${RIGHT}`;
};

const BusTrace = ({ segs, y }) => {
  const lo = y + SWING;
  return segs.map(([start, text], i) => {
    const first = start === null;
    const next = segs[i + 1];
    const a = first ? 6 : at(start) + 2;
    const b = next ? at(next[0]) - 2 : RIGHT;
    if (text === "z")
      return (
        <React.Fragment key={i}>
          <path d={`M${a - 2} ${y + 12}H${b}`} stroke="#0000ff" />
          <path d={`M${b + 1} ${y + 2}V${lo - 2}`} stroke={PALE} />
        </React.Fragment>
      );
    const cap = next ? `H${b}` : `H${RIGHT}`;
    return (
      <React.Fragment key={i}>
        <path
          stroke={PALE}
          d={
            `M${a} ${first ? y : y + 6}V${y}${cap}${next ? `V${y + 6}` : ""}` +
            `M${a} ${first ? lo : lo - 6}V${lo}${cap}${next ? `V${lo - 6}` : ""}` +
            (next ? `M${b + 2} ${y + 6}V${lo - 6}` : "")
          }
        />
        {text && (
          <TraceText x={first ? 15 : a + 6} y={y + 20}>
            {text}
          </TraceText>
        )}
      </React.Fragment>
    );
  });
};

const Trace = ({ wave, row }) => {
  const y = TOP + row * ROW;
  if (wave.kind === "bit") return <path d={bitPath(wave, y)} stroke={GREEN} />;
  if (wave.kind === "bus") return <BusTrace segs={wave.segs} y={y} />;
  if (wave.kind === "unknown")
    return <path d={`M8 ${y + 12}H${RIGHT}`} stroke="#ff0000" />;
  return (
    <>
      <rect y={y - 4} width="100%" height="32" fill="#000" />
      <TraceText $wide x="15" y={y + 21}>
        {wave.text}
      </TraceText>
    </>
  );
};

const gridLines = Array.from({ length: 27 }, (_, i) => at(1 + i * 2.5));
const minorTicks = Array.from({ length: 67 }, (_, i) => i);
const timeLabels = [
  "238800000", "239000000", "239200000", "239400000", "239600000", "239800000", "240000000",
];

const WaveCanvas = () => (
  <WaveSvg role="img" aria-label="Signal waveforms">
    <rect width="100%" height="100%" fill="#000" />
    <g stroke="#808080" strokeWidth="2">
      {gridLines.map((x) => (
        <line key={x} x1={x} x2={x} y1="0" y2="100%" />
      ))}
    </g>
    <g fill="none" strokeWidth="2">
      {signals.map((s, i) => (
        <Trace key={i} wave={s.wave} row={i} />
      ))}
    </g>
    <CursorLine x={CURSOR} y="2" width="6" height="100%" />
  </WaveSvg>
);

const TimeScale = () => (
  <WaveSvg role="img" aria-label="Time scale">
    <g stroke={GREEN} strokeWidth="2">
      {minorTicks.map((t) => (
        <line key={t} x1={at(t)} x2={at(t)} y1={t % 5 === 1 ? 0 : 6} y2="14" />
      ))}
    </g>
    {timeLabels.map((t, i) => (
      <ScaleText key={t} x={at(1 + i * 10) - 1} y="39" textAnchor="middle">
        {t} ps
      </ScaleText>
    ))}
    <rect width="5" height="44" fill="#000" />
    <line x1="6" x2="99.800%" y1="45" y2="45" stroke="#808080" strokeWidth="2" />
    <CursorLine x={CURSOR} y="0" width="6" height="44" />
    <rect x="1103" y="47" width="144" height="30" fill="#000" stroke="#ffd500" strokeWidth="2" />
    <ScaleText $cursor x={CURSOR + 2} y="71" textAnchor="middle">
      239459700 ps
    </ScaleText>
  </WaveSvg>
);

/* ---------- page ---------- */

const SignalRow = ({ signal }) => {
  const expandable = signal.wave.kind === "bus" || signal.group;
  return (
    <NameRow $selected={signal.selected} $group={signal.group}>
      <Branch $group={signal.group} $last={signal.last}>
        {expandable && (
          <ExpandButton aria-label={signal.group ? "Collapse" : "Expand"}>
            <svg width="20" height="20" viewBox="0 0 20 20" aria-hidden="true">
              <path d={signal.group ? "M5 10h10" : "M5 10h10M10 5v10"} stroke="#000" strokeWidth="2" />
            </svg>
          </ExpandButton>
        )}
      </Branch>
      <Connector $wide={!expandable} />
      <Diamond port={signal.port} red={signal.group} />
      <NameText>{signal.name}</NameText>
    </NameRow>
  );
};

const App = () => (
  <Page>
    <GlobalStyle />
    <Defs />
    <TopStrip />
    <TitleBar>
      <WaveLogo />
      <TitleText>Wave</TitleText>
      <WindowControls>
        <WindowButton aria-label="Minimize">
          <svg width="22" height="22" viewBox="0 0 22 22" aria-hidden="true">
            <path d="M1 11h20" stroke="#000" strokeWidth="2" />
          </svg>
        </WindowButton>
        <WindowButton aria-label="Restore">
          <svg width="22" height="22" viewBox="0 0 22 22" aria-hidden="true">
            <path d="M2 6h14v14H2zM6 6V2h14v14h-4" stroke="#000" strokeWidth="2" fill="none" />
          </svg>
        </WindowButton>
        <WindowButton aria-label="Close">
          <svg width="22" height="22" viewBox="0 0 22 22" aria-hidden="true">
            <path d="M1 1l20 20M21 1L1 21" stroke="#000" strokeWidth="2" fill="none" />
          </svg>
        </WindowButton>
      </WindowControls>
    </TitleBar>
    <MenuBar>
      {["File", "Edit", "View", "Add", "Format", "Tools", "Bookmarks", "Window", "Help"].map((m) => (
        <MenuLink key={m} href={`#${m.toLowerCase()}`}>
          {m}
        </MenuLink>
      ))}
    </MenuBar>
    <Dock>
      <PaneTitle>
        <WaveLogo />
        <h2>Wave - Default</h2>
        <DragLines />
        <DragDots width="36" height="16" viewBox="0 0 36 16" aria-hidden="true">
          <path d="M0 1h36M2 7h34M0 13h36" stroke="#fff" strokeWidth="2" strokeDasharray="3 3" />
          <path d="M2 3h34M4 9h32M2 15h34" stroke="#202020" strokeWidth="2" strokeDasharray="3 3" />
        </DragDots>
        <DragLines />
        <PaneButton aria-label="Dock">
          <svg width="18" height="18" viewBox="0 0 9 9" aria-hidden="true">
            <path d="M4.500 0v9M0 4.500h9" stroke="#000" strokeDasharray="1 1" />
            <path d="M3 3h3v3H3z" stroke="#000" strokeWidth=".5" fill="none" strokeDasharray="1 1" />
          </svg>
        </PaneButton>
        <PaneButton aria-label="Undock">
          <svg width="18" height="18" viewBox="0 0 9 9" aria-hidden="true">
            <path d="M3 2H1v6h6V6" stroke="#000" fill="none" strokeWidth="1.200" />
            <path d="M8.500 0L5 3.500M3 1.500v4.500h4.500z" stroke="#000" strokeWidth="1.400" />
          </svg>
        </PaneButton>
        <PaneButton aria-label="Close pane">
          <svg width="18" height="18" viewBox="0 0 9 9" aria-hidden="true">
            <path d="M1 1l7 7M8 1L1 8" stroke="#000" strokeWidth="1.800" />
          </svg>
        </PaneButton>
      </PaneTitle>
      <ToolbarRow groups={topBars} />
      <ToolbarRow groups={lowerBars} />
      <Panes>
        <Column $width="316px">
          <Header>
            <MarkButton aria-label="Signal filter">
              <svg width="34" height="32" viewBox="0 0 34 32" aria-hidden="true">
                <path d="M12 1l8 12H1z" fill="#c828e8" stroke="#701080" />
                <rect x="17" y="11" width="14" height="14" fill="#18b040" stroke="#0a6a20" strokeWidth="2" />
                <circle cx="18" cy="13" r="6" fill="#00e8ff" />
                <path d="M11 11l9 10-9 11-9-11z" fill="#0050f0" />
              </svg>
              <Triangle />
            </MarkButton>
          </Header>
          <Ridge />
          <NameList>
            {signals.map((s, i) => (
              <SignalRow key={i} signal={s} />
            ))}
          </NameList>
          <Ridge />
          <FooterRow>
            <FooterIcons>
              <svg width="20" height="24" viewBox="0 0 20 24" aria-hidden="true">
                <path d="M5 2h4l2 4 3-4h4v14H4z" fill="#555" />
                <path d="M0 18h18l2 3" stroke="#5890e0" strokeWidth="2" fill="none" />
              </svg>
              <svg width="22" height="24" viewBox="0 0 22 24" aria-hidden="true">
                <rect x="1" y="2" width="20" height="17" fill="#dde8fa" stroke="#4a7cc8" />
                <path d="M1 4h20" stroke="#4a7cc8" strokeWidth="4" />
                <path d="M4 10h9M4 14h6" stroke="#8090a8" strokeWidth="2" />
                <path d="M10 18h6l-3 5z" fill="#4a7cc8" />
              </svg>
              <svg width="20" height="24" viewBox="0 0 20 24" aria-hidden="true">
                <circle cx="10" cy="12" r="9" fill="#58b054" stroke="#b8e0b4" />
                <path d="M10 7v10M5 12h10" stroke="#fff" strokeWidth="3" />
              </svg>
            </FooterIcons>
            <FooterLabel>Now</FooterLabel>
          </FooterRow>
          <FooterRow $cursor>
            <FooterIcons $shift>
              <svg width="22" height="24" viewBox="0 0 22 24" aria-hidden="true">
                <path d="M5 12V6q6-8 11 0v4" stroke="#c0c0c0" strokeWidth="3" fill="none" />
                <rect x="1" y="11" width="20" height="12" fill="#f8c858" stroke="#c88820" />
              </svg>
              <svg width="22" height="24" viewBox="0 0 22 24" aria-hidden="true">
                <path d="M4 20l8-10" stroke="#8cb0e8" strokeWidth="6" strokeLinecap="round" />
                <path d="M11 11l4-10 1 5 5 1-1 3z" fill="#d0d4da" />
              </svg>
              <svg width="20" height="24" viewBox="0 0 20 24" aria-hidden="true">
                <circle cx="10" cy="11" r="9" fill="#e85048" stroke="#f8b0a8" />
                <path d="M5 11h10" stroke="#fff" strokeWidth="3" />
              </svg>
            </FooterIcons>
            <FooterLabel $cursor>Cursor 1</FooterLabel>
          </FooterRow>
          <Ridge />
          <ScrollRow $inset>
            <ScrollButton aria-label="Scroll names left">
              <SideArrow $left />
            </ScrollButton>
            <Thumb $width="100px" />
            <Trough />
            <ScrollButton aria-label="Scroll names right">
              <SideArrow />
            </ScrollButton>
          </ScrollRow>
        </Column>
        <Divider />
        <Column $width="200px">
          <Header $right>Msgs</Header>
          <Ridge />
          <ValueList>
            {signals.map((s, i) => (
              <ValueRow key={i} $selected={s.selected}>
                {s.value}
              </ValueRow>
            ))}
          </ValueList>
          <Ridge />
          <FooterRow>
            <FooterLabel>240000000 ps</FooterLabel>
          </FooterRow>
          <FooterRow $cursor>
            <FooterLabel $cursor>239459700 ps</FooterLabel>
          </FooterRow>
          <Ridge />
          <ScrollRow>
            <ScrollButton disabled aria-label="Scroll values left">
              <SideArrow $left $dim />
            </ScrollButton>
            <Trough />
            <ScrollButton disabled aria-label="Scroll values right">
              <SideArrow $dim />
            </ScrollButton>
          </ScrollRow>
        </Column>
        <Divider />
        <Column>
          <WaveHeader>
            <HeaderCursor />
          </WaveHeader>
          <Ridge />
          <WaveBody>
            <WaveCanvas />
          </WaveBody>
          <Ridge />
          <ScaleBody>
            <TimeScale />
          </ScaleBody>
          <Ridge />
          <WaveScroll>
            <ScrollButton aria-label="Scroll waves left">
              <SideArrow $left />
            </ScrollButton>
            <SolidTrough />
            <CursorThumb />
            <ScrollButton aria-label="Scroll waves right">
              <SideArrow />
            </ScrollButton>
          </WaveScroll>
        </Column>
        <Divider />
        <Column $width="34px">
          <Header />
          <Ridge />
          <VerticalScroll>
            <ScrollButton $vertical aria-label="Scroll up">
              <Triangle $up />
            </ScrollButton>
            <SolidTrough $part={366} />
            <VerticalThumb>
              <ThumbMark />
            </VerticalThumb>
            <SolidTrough $part={322} />
            <ScrollButton $vertical aria-label="Scroll down">
              <Triangle />
            </ScrollButton>
          </VerticalScroll>
          <Ridge />
          <CornerFill $height="78px" />
          <Ridge />
          <CornerFill $height="38px" />
        </Column>
      </Panes>
    </Dock>
    <StatusBar>
      <StatusCell $width="336px">238774200 ps to 240113700 ps</StatusCell>
      <StatusCell>rd_end</StatusCell>
      <svg width="20" height="29" viewBox="0 0 20 29" aria-hidden="true">
        <path d="M2 29L20 5M9 29L20 15" stroke="#808080" strokeWidth="2" />
      </svg>
    </StatusBar>
    <FloatingScroller>
      <FloatingBar />
    </FloatingScroller>
  </Page>
);

/* ---------- styles ---------- */

const GlobalStyle = createGlobalStyle`
  * {
    box-sizing: border-box;
  }
  body {
    margin: 0;
    background: #f0f0f0;
    color: #000;
    font-family: ${UI};
    font-size: 21px;
    overflow: hidden;
  }
  button {
    padding: 0;
    border: 0;
    background: none;
    font: inherit;
  }
  input {
    font: inherit;
    outline: none;
  }
  h1, h2, ul {
    margin: 0;
    padding: 0;
    font-weight: normal;
    list-style: none;
  }
  svg {
    display: block;
    flex: none;
  }
`;

const raised = css`
  border: 2px solid;
  border-color: #fff #6d6d6d #6d6d6d #fff;
  background: #f0f0f0;
`;

const HiddenSvg = styled.svg`
  position: absolute;
  width: 0;
  height: 0;
`;

const Page = styled.div`
  position: relative;
  display: flex;
  flex-direction: column;
  height: 100vh;
`;

const TopStrip = styled.div`
  position: absolute;
  top: 0;
  left: 50%;
  width: 482px;
  height: 2px;
  margin-left: -242px;
  background: linear-gradient(90deg, #0078d7 97px, #d8d8d8 97px);
`;

const TitleBar = styled.header`
  display: flex;
  align-items: center;
  height: 46px;
  padding-left: 4px;
  background: #fff;
`;

const TitleText = styled.h1`
  margin-left: 6px;
  font-family: ${MENU};
  font-size: 25px;
`;

const WindowControls = styled.div`
  display: flex;
  margin-left: auto;
  padding-right: 4px;
`;

const WindowButton = styled.button`
  display: grid;
  place-items: center;
  width: 92px;
  height: 46px;
`;

const MenuBar = styled.nav`
  display: flex;
  align-items: center;
  height: 36px;
  padding: 0 0 0 14px;
  gap: 28px;
  background: #fff;
`;

const MenuLink = styled.a`
  color: #000;
  font-family: ${MENU};
  font-size: 25px;
  text-decoration: none;
`;

const Dock = styled.main`
  display: flex;
  flex: 1;
  flex-direction: column;
  min-height: 0;
  margin-top: 4px;
  margin-right: 2px;
  border: 2px solid #a0a0a0;
  border-bottom: 0;
  box-shadow: inset 2px 2px 0 #fff, inset -2px 0 0 #fff;
  padding: 2px 2px 0 4px;
`;

const PaneTitle = styled.div`
  display: flex;
  align-items: center;
  height: 38px;
  padding: 0 5px 0 2px;
  border-bottom: 2px solid #a0a0a0;
  background: #99b4d1;

  h2 {
    margin: 0 12px 0 7px;
    color: #101828;
    font-size: 22px;
    white-space: nowrap;
  }
`;

const DragLines = styled.div`
  flex: 1 1 0;
  height: 16px;
  background: linear-gradient(
    #d0fbfd 4px,
    #000 4px,
    #000 6px,
    transparent 6px,
    transparent 10px,
    #d0fbfd 10px,
    #d0fbfd 14px,
    #000 14px
  );
`;

const DragDots = styled.svg`
  margin: 0 4px;
`;

const PaneButton = styled.button`
  ${raised}
  display: grid;
  place-items: center;
  width: 24px;
  height: 26px;
  margin-left: 8px;
`;

const BarRow = styled.div`
  display: flex;
  gap: 3px;
  height: 64px;
`;

const Group = styled.div`
  ${raised}
  display: flex;
  align-items: flex-start;
  padding: 10px 7px 0 2px;
`;

const Tools = styled.div`
  display: flex;
  align-items: center;
`;

const Grip = styled.span`
  width: 8px;
  height: 56px;
  margin: -8px 10px 0 0;
  border: 2px solid;
  border-color: #fff #6d6d6d #6d6d6d #fff;
  background: #fff;
`;

const IconButton = styled.button`
  width: 44px;
  height: 32px;
  padding: 0 6px;
`;

const FrameSlot = styled.span`
  width: 52px;
  padding-left: 7px;
`;

const FrameButton = styled.button`
  ${raised}
  display: block;
  width: 40px;
  height: 40px;
  padding: 2px;
  ${({ $pressed }) =>
    $pressed &&
    css`
      border-color: #999 #e3e3e3 #e3e3e3 #999;
      background: #fff;
    `}
`;

const Bar = styled.span`
  width: 2px;
  height: 32px;
  margin: 0 11px;
  background: repeating-linear-gradient(#000 0 2px, transparent 2px 4px);
`;

const Gap = styled.span`
  width: 8px;
`;

const CaretButton = styled.button`
  display: grid;
  place-items: center;
  width: 18px;
  height: 32px;
  padding-top: 4px;
`;

const Triangle = styled.span`
  width: ${({ $big }) => ($big ? "26px" : "11px")};
  height: ${({ $big }) => ($big ? "14px" : "7px")};
  background: #000;
  clip-path: ${({ $up }) =>
    $up ? "polygon(50% 0, 100% 100%, 0 100%)" : "polygon(0 0, 100% 0, 50% 100%)"};
`;

const RunLength = styled.span`
  display: flex;
  gap: 2px;
  margin: 0 10px 0 8px;
`;

const sunken = css`
  height: 37px;
  border: 2px solid;
  border-color: #999 #e8e8e8 #e8e8e8 #999;
  background: #fff;
`;

const TimeInput = styled.input`
  ${sunken}
  width: 118px;
  padding: 4px 0 0;
  font-family: "Liberation Mono", monospace;
  font-size: 23px;
  text-align: right;
`;

const Spinner = styled.span`
  display: flex;
  flex-direction: column;
  width: 28px;
`;

const SpinButton = styled.button`
  ${raised}
  display: grid;
  place-items: center;
  height: 18px;
`;

const SearchBox = styled.span`
  display: flex;
  align-items: center;
  height: 36px;
  margin: 0 4px 0 12px;

  label {
    width: 85px;
  }
`;

const SearchInput = styled.input`
  ${sunken}
  width: 231px;
`;

const ComboButton = styled.button`
  ${raised}
  display: grid;
  place-items: center;
  width: 34px;
  height: 34px;
  margin: 0 2px 0 4px;
`;

const Panes = styled.section`
  display: flex;
  flex: 1;
  min-height: 0;
  margin: 4px 2px 0 0;
  border-top: 2px solid #a0a0a0;
  border-left: 2px solid #a0a0a0;
  border-bottom: 2px solid #fff;
`;

const Column = styled.div`
  display: flex;
  flex-direction: column;
  flex: ${({ $width }) => ($width ? `0 0 ${$width}` : "1 1 0")};
  min-width: 0;
`;

const Divider = styled.div`
  flex: 0 0 6px;
  border-left: 3px solid #a0a0a0;
  background: #fff;
`;

const Ridge = styled.div`
  flex: 0 0 6px;
  border-top: 2px solid #a0a0a0;
  border-bottom: 2px solid #fff;
  background: #f0f0f0;
`;

const Header = styled.div`
  display: flex;
  align-items: center;
  justify-content: ${({ $right }) => ($right ? "flex-end" : "flex-start")};
  flex: 0 0 36px;
  padding: 2px 11px 0 20px;
  background: #808080;
  color: #fff;
`;

const MarkButton = styled.button`
  display: flex;
  align-items: center;
  gap: 5px;

  span {
    margin-top: 12px;
  }
`;

const listPane = css`
  flex: 1;
  min-height: 0;
  padding-top: 6px;
  overflow: hidden;
  background: #808080;
  color: #fff;
`;

const NameList = styled.ul`
  ${listPane}
  border-left: 16px solid #fff;
`;

const ValueList = styled.ul`
  ${listPane}
`;

const listRow = css`
  height: 34px;
  line-height: 30px;
  white-space: nowrap;
  ${({ $selected }) =>
    $selected &&
    css`
      background: linear-gradient(#fff, #fff) 0 0 / 100% 32px no-repeat;
      color: #000;
    `}
`;

const NameRow = styled.li`
  ${listRow}
  display: flex;
  padding-left: ${({ $group }) => ($group ? "10px" : "46px")};
`;

const Branch = styled.span`
  display: grid;
  place-items: center;
  flex: 0 0 22px;
  height: 34px;
  background: ${({ $group, $last }) =>
    $group
      ? "none"
      : `linear-gradient(#e0e0e0, #e0e0e0) 10px 0 / 2px ${$last ? "17px" : "34px"} no-repeat`};
`;

const ExpandButton = styled.button`
  width: 20px;
  height: 20px;
  border-radius: 2px;
  background: linear-gradient(#fff 50%, #b4c0dc);
`;

const Connector = styled.span`
  width: ${({ $wide }) => ($wide ? "19px" : "7px")};
  height: 2px;
  margin-top: 16px;
  margin-left: ${({ $wide }) => ($wide ? "-12px" : "0")};
  background: #e0e0e0;
`;

const NameText = styled.span`
  margin-left: 9px;
  font-size: 22px;
`;

const ValueRow = styled.li`
  ${listRow}
  padding-left: 5px;
`;

const FooterRow = styled.div`
  display: flex;
  align-items: center;
  flex: 0 0 ${({ $cursor }) => ($cursor ? "34px" : "44px")};
  background: #808080;
`;

const FooterIcons = styled.div`
  display: flex;
  gap: 3px;
  width: 96px;
  padding-left: ${({ $shift }) => ($shift ? "24px" : "18px")};
`;

const FooterLabel = styled.span`
  flex: 1;
  height: 100%;
  padding-right: 18px;
  line-height: ${({ $cursor }) => ($cursor ? "34px" : "44px")};
  text-align: right;
  background: ${({ $cursor }) => ($cursor ? "#fff" : "none")};
  color: ${({ $cursor }) => ($cursor ? "#000" : "#fff")};
`;

const ScrollRow = styled.div`
  display: flex;
  flex: 0 0 38px;
  padding: 2px 1px 2px ${({ $inset }) => ($inset ? "16px" : "0")};
  background: #808080;
`;

const ScrollButton = styled.button`
  ${raised}
  display: grid;
  place-items: center;
  flex: none;
  width: ${({ $vertical }) => ($vertical ? "32px" : "34px")};
  height: ${({ $vertical }) => ($vertical ? "30px" : "auto")};
`;

const SideArrow = styled.span`
  width: 9px;
  height: 14px;
  background: ${({ $dim }) => ($dim ? "#a0a0a0" : "#000")};
  clip-path: ${({ $left }) =>
    $left ? "polygon(100% 0, 100% 100%, 0 50%)" : "polygon(0 0, 100% 50%, 0 100%)"};
`;

const Thumb = styled.div`
  ${raised}
  width: ${({ $width }) => $width};
`;

const Trough = styled.div`
  flex: 1;
  background: #f8f8f8;
`;

const WaveScroll = styled.div`
  display: flex;
  flex: 0 0 38px;
  padding: 0 4px 0 2px;
  border-top: 4px solid #808080;
  border-bottom: 2px solid #808080;
  background: #fff;

  ${ScrollButton} {
    width: 30px;
    height: 30px;
  }
`;

const SolidTrough = styled.div`
  flex: ${({ $part }) => $part || 1} 1 0;
  margin-bottom: ${({ $part }) => ($part ? "0" : "2px")};
  background: #c8c8c8;
`;

const CursorThumb = styled.div`
  ${raised}
  width: 17px;
  height: 30px;
  background: linear-gradient(90deg, #f0f0f0 9px, #ffd500 9px, #ffd500 12px, #f0f0f0 12px);
`;

const WaveHeader = styled.div`
  flex: 0 0 36px;
  padding-top: 2px;
  background: #000;
`;

const HeaderCursor = styled.div`
  width: 6px;
  height: 34px;
  margin-left: ${CURSOR}px;
  background: #ffd500;
`;

const WaveBody = styled.div`
  flex: 1;
  min-height: 0;
  overflow: hidden;
  background: #000;
`;

const ScaleBody = styled.div`
  flex: 0 0 78px;
  overflow: hidden;
  background: #000;
`;

const WaveSvg = styled.svg`
  width: 100%;
  height: 100%;
`;

const TraceText = styled.text`
  fill: #fff;
  font-family: ${UI};
  font-size: ${({ $wide }) => ($wide ? "22px" : "21px")};
  stroke: none;
`;

const ScaleText = styled(TraceText)`
  fill: ${({ $cursor }) => ($cursor ? "#ffd500" : GREEN)};
`;

const CursorLine = styled.rect`
  fill: #ffd500;
  mix-blend-mode: difference;
`;

const VerticalScroll = styled.div`
  display: flex;
  flex: 1;
  flex-direction: column;
  min-height: 0;
  padding: 2px 2px 4px 0;
  background: #c8c8c8;
`;

const VerticalThumb = styled.div`
  ${raised}
  flex: 488 1 0;
`;

const ThumbMark = styled.div`
  height: 14px;
  margin-top: 120px;
  background: #fff;
`;

const CornerFill = styled.div`
  flex: 0 0 ${({ $height }) => $height};
  background: #808080;
`;

const StatusBar = styled.footer`
  display: flex;
  gap: 3px;
  flex: none;
  height: 31px;
  padding: 0 4px 0 6px;
`;

const StatusCell = styled.div`
  flex: ${({ $width }) => ($width ? `0 0 ${$width}` : "1")};
  padding: 4px 0 0 11px;
  border-top: 2px solid #a0a0a0;
  border-left: 2px solid #a0a0a0;
  border-right: 2px solid #fff;
  line-height: 25px;
  white-space: nowrap;
`;

const FloatingScroller = styled.div`
  position: absolute;
  top: 99px;
  right: 2px;
  width: 16px;
  height: 102px;
  padding: 32px 1px 0;
  border: 4px solid rgba(80, 80, 80, 0.75);
  border-radius: 8px;
`;

const FloatingBar = styled.div`
  width: 6px;
  height: 62px;
  border-radius: 3px;
  background: #ff6a1a;
`;

export default App;
